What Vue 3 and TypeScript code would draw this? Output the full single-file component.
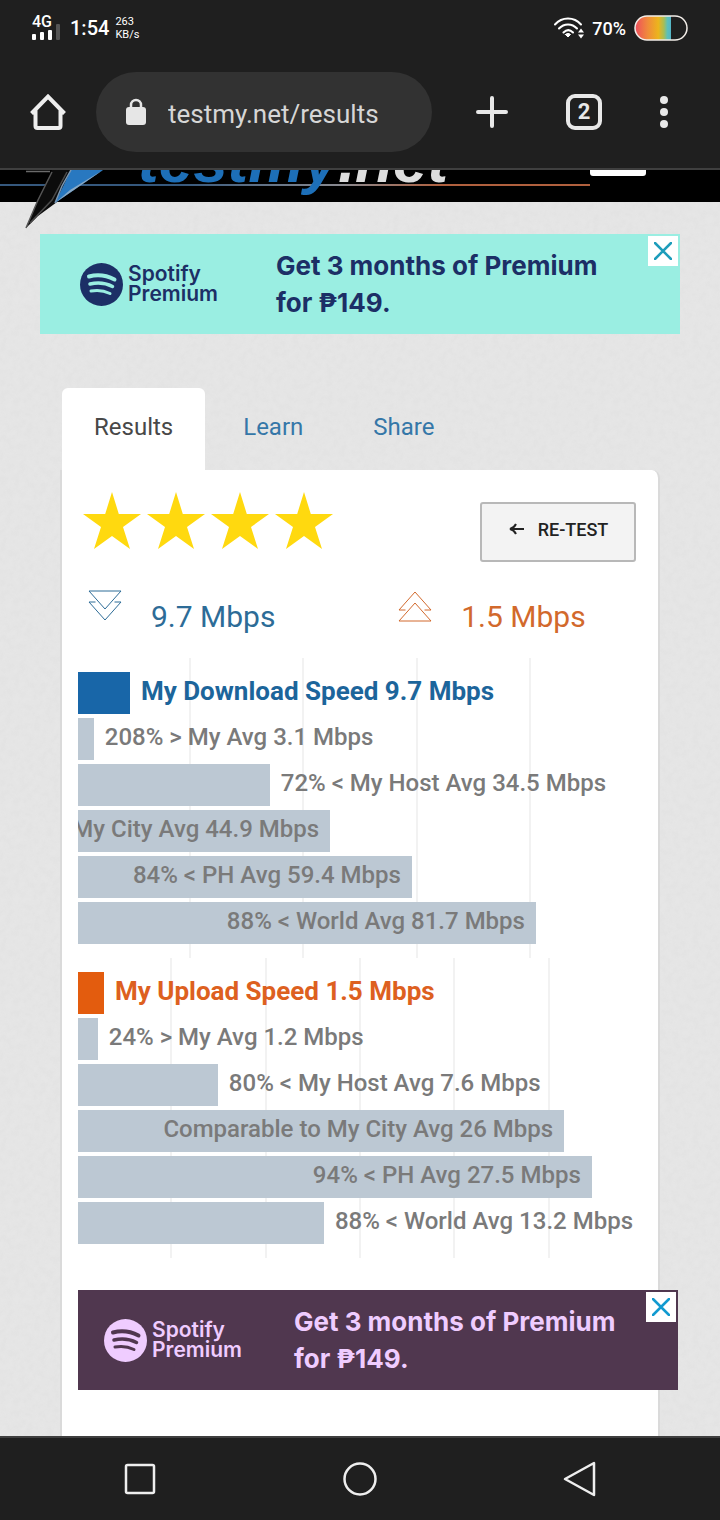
<script setup lang="ts">
interface Bar {
  label: string
  width: number
  inside?: boolean
  lead?: boolean
}

interface Chart {
  id: string
  columns: number
  bars: Bar[]
}

const charts: Chart[] = [
  {
    id: 'download',
    columns: 5,
    bars: [
      { label: 'My Download Speed 9.7 Mbps', width: 9.2, lead: true },
      { label: '208% > My Avg 3.1 Mbps', width: 2.8 },
      { label: '72% < My Host Avg 34.5 Mbps', width: 34 },
      { label: 'My City Avg 44.9 Mbps', width: 44.7, inside: true },
      { label: '84% < PH Avg 59.4 Mbps', width: 59.2, inside: true },
      { label: '88% < World Avg 81.7 Mbps', width: 81.2, inside: true },
    ],
  },
  {
    id: 'upload',
    columns: 6,
    bars: [
      { label: 'My Upload Speed 1.5 Mbps', width: 4.6, lead: true },
      { label: '24% > My Avg 1.2 Mbps', width: 3.5 },
      { label: '80% < My Host Avg 7.6 Mbps', width: 24.8 },
      { label: 'Comparable to My City Avg 26 Mbps', width: 86.2, inside: true },
      { label: '94% < PH Avg 27.5 Mbps', width: 91.1, inside: true },
      { label: '88% < World Avg 13.2 Mbps', width: 43.6 },
    ],
  },
]
</script>

<template>
  <div class="screen">
    <header class="chrome">
      <div class="status">
        <div class="network">
          <span class="gen">4G</span>
          <svg class="signal" width="30" height="18" viewBox="0 0 30 18" aria-hidden="true">
            <g fill="#fff">
              <rect x="0" y="12" width="4" height="6" rx="1" />
              <rect x="8" y="10" width="4" height="8" rx="1" />
              <rect x="16" y="8" width="4" height="10" rx="1" />
            </g>
            <rect x="24" y="2" width="4" height="16" rx="1" fill="#555" />
          </svg>
        </div>
        <span class="clock">1:54</span>
        <span class="rate">263<br />KB/s</span>
        <div class="status-right">
          <svg width="30" height="22" viewBox="0 0 30 22" fill="none" stroke="#fff" stroke-width="2" stroke-linecap="round" aria-hidden="true">
            <path d="M1 7.500C8-.5 20-.5 27 7.500M5 11.500C10 6 18 6 23 11.500M9.500 15.500C12.500 12.500 16 12.500 19 15.500" />
            <path d="M11.500 17.500 14 20l2.500-2.500C15 16 13 16 11.500 17.500z" fill="#fff" stroke-width="1" />
            <path d="m27 11.500 3 4h-6zM27 21.500l3-4h-6z" fill="#fff" stroke="none" />
          </svg>
          <span class="percent">70%</span>
          <svg width="54" height="26" viewBox="0 0 54 26" aria-hidden="true">
            <defs>
              <linearGradient id="charge" x1="0" x2="1" y1="0" y2="0">
                <stop offset="0" stop-color="#ee4d5e" />
                <stop offset=".35" stop-color="#f08a3c" />
                <stop offset=".65" stop-color="#ecb51c" />
                <stop offset=".8" stop-color="#a8bd55" />
                <stop offset=".9" stop-color="#5cc0b8" />
                <stop offset="1" stop-color="#55b5c8" />
              </linearGradient>
            </defs>
            <path d="M13 1h24v24H13a12 12 0 0 1 0-24z" fill="url(#charge)" />
            <rect x="1" y="1" width="52" height="24" rx="12" fill="none" stroke="#f2ede8" stroke-width="1.500" />
          </svg>
        </div>
      </div>

      <div class="toolbar">
        <button class="tool" type="button" aria-label="Home">
          <svg width="38" height="38" viewBox="0 0 38 38" fill="none" stroke="#eee" stroke-width="4" aria-hidden="true">
            <path d="M2.500 20.500 19 3.500l16.500 17M6.500 17v16q0 2 2 2h21q2 0 2-2V17" />
          </svg>
        </button>
        <label class="address">
          <svg width="20" height="28" viewBox="0 0 20 28" aria-hidden="true">
            <path d="M5 10V7a5 5 0 0 1 10 0v3" fill="none" stroke="#e6e6e6" stroke-width="2.500" />
            <rect y="9" width="20" height="18" rx="3" fill="#e6e6e6" />
          </svg>
          <input type="text" value="testmy.net/results" aria-label="Address" />
        </label>
        <button class="tool plus" type="button" aria-label="New tab">
          <svg width="32" height="32" viewBox="0 0 32 32" stroke="#e8e8e8" stroke-width="4" stroke-linecap="round" aria-hidden="true">
            <path d="M2 16h28M16 2v28" />
          </svg>
        </button>
        <button class="tool switcher" type="button" aria-label="Open tabs"><span>2</span></button>
        <button class="tool more" type="button" aria-label="Menu">
          <svg width="8" height="32" viewBox="0 0 8 32" fill="#e8e8e8" aria-hidden="true">
            <circle cx="4" cy="4" r="4" /><circle cx="4" cy="16" r="4" /><circle cx="4" cy="28" r="4" />
          </svg>
        </button>
      </div>
    </header>

    <main class="page">
      <div class="site-bar">
        <div class="rule"></div>
        <a class="brand" href="#"><span>testmy</span>.net</a>
        <button class="site-menu" type="button" aria-label="Site menu"></button>
        <svg class="bolt" width="84" height="60" viewBox="0 0 84 60" aria-hidden="true">
          <path d="M2 1.500H26" stroke="#6a6a6a" stroke-width="1.500" />
          <path d="M28 0H50L33 32 14 46 2 58 14 30z" fill="#0c0c0c" />
          <path d="M28 2 14 30 2 58" fill="none" stroke="#555" stroke-width="1.500" />
          <path d="M43 2 28 30 6 53" fill="none" stroke="#4a4a4a" stroke-width="1.500" />
          <path d="M47 0H79L31 33z" fill="#2878c0" />
          <path d="M47 0 38 16 31 33" fill="none" stroke="#7a98b4" stroke-width="1.500" />
          <path d="M79 0 31 33 46 20z" fill="#8aa9c4" />
        </svg>
      </div>

      <section class="ad ad-mint">
        <div class="ad-logo">
          <svg width="43" height="43" viewBox="0 0 43 43" aria-hidden="true">
            <circle cx="21.500" cy="21.500" r="21.500" fill="currentColor" />
            <g class="waves" fill="none" stroke-linecap="round">
              <path d="M9 13.500q13-3.500 25.500 3" stroke-width="4" />
              <path d="M10 21q12-3 22.500 2.500" stroke-width="3.500" />
              <path d="M11 28q10-2 19 2.500" stroke-width="3" />
            </g>
          </svg>
          <span>Spotify<br />Premium</span>
        </div>
        <p>Get 3 months of Premium<br />for ₱149.</p>
        <button class="close" type="button" aria-label="Close ad">
          <svg width="18" height="18" viewBox="0 0 18 18" fill="none" stroke="#1d9dbb" stroke-width="2.500" stroke-linecap="round" aria-hidden="true"><path d="m1 1 16 16M17 1 1 17" /></svg>
        </button>
      </section>

      <div class="results">
        <nav class="tabs">
          <a class="current" href="#results">Results</a>
          <a href="#learn">Learn</a>
          <a href="#share">Share</a>
        </nav>

        <div class="card">
          <div class="rating">
            <div class="stars" role="img" aria-label="4 stars">
              <svg v-for="n in 4" :key="n" width="60" height="58" viewBox="0 0 60 58" aria-hidden="true">
                <path d="M30 0 36.800 22H59L41 35 48 57 30 44 12 57 19 35 1 22H23.200z" fill="#ffd90f" />
              </svg>
            </div>
            <button class="retest" type="button">
              <svg width="16" height="14" viewBox="0 0 16 14" fill="none" stroke="#222" stroke-width="2" aria-hidden="true"><path d="M16 7H2M8 2Q6 6 2 7q4 1 6 5" /></svg>
              RE-TEST
            </button>
          </div>

          <div class="totals">
            <div class="total down">
              <svg width="34" height="32" viewBox="0 0 34 32" fill="none" stroke="currentColor" aria-hidden="true">
                <path d="M1 1h32L17 19zM7.500 12H1l16 18 16-18h-6.500" />
              </svg>
              <span>9.7 Mbps</span>
            </div>
            <div class="total up">
              <svg width="34" height="32" viewBox="0 0 34 32" fill="none" stroke="currentColor" aria-hidden="true">
                <path d="M1 31h32L17 13zM7.500 20H1L17 2l16 18h-6.500" />
              </svg>
              <span>1.5 Mbps</span>
            </div>
          </div>

          <section v-for="chart in charts" :key="chart.id" class="chart" :class="chart.id">
            <div class="grid" aria-hidden="true"><i v-for="n in chart.columns" :key="n"></i></div>
            <div v-for="bar in chart.bars" :key="bar.label" class="row" :class="{ lead: bar.lead }">
              <div class="bar" :style="{ width: bar.width + '%' }">
                <span v-if="bar.inside">{{ bar.label }}</span>
              </div>
              <span v-if="!bar.inside" class="beside">{{ bar.label }}</span>
            </div>
          </section>

          <section class="ad ad-plum">
            <div class="ad-logo">
              <svg width="43" height="43" viewBox="0 0 43 43" aria-hidden="true">
                <circle cx="21.500" cy="21.500" r="21.500" fill="currentColor" />
                <g class="waves" fill="none" stroke-linecap="round">
                  <path d="M9 13.500q13-3.500 25.500 3" stroke-width="4" />
                  <path d="M10 21q12-3 22.500 2.500" stroke-width="3.500" />
                  <path d="M11 28q10-2 19 2.500" stroke-width="3" />
                </g>
              </svg>
              <span>Spotify<br />Premium</span>
            </div>
            <p>Get 3 months of Premium<br />for ₱149.</p>
            <button class="close" type="button" aria-label="Close ad">
              <svg width="18" height="18" viewBox="0 0 18 18" fill="none" stroke="#129ad0" stroke-width="2.500" stroke-linecap="round" aria-hidden="true"><path d="m1 1 16 16M17 1 1 17" /></svg>
            </button>
          </section>
        </div>
      </div>
    </main>

    <nav class="system">
      <button class="tool" type="button" aria-label="Recent apps">
        <svg width="36" height="36" viewBox="0 0 36 36" fill="none" stroke="#eee" stroke-width="2.500" aria-hidden="true"><rect x="4" y="4" width="28" height="28" rx="1.500" /></svg>
      </button>
      <button class="tool" type="button" aria-label="Home screen">
        <svg width="36" height="36" viewBox="0 0 36 36" fill="none" stroke="#eee" stroke-width="2.500" aria-hidden="true"><circle cx="18" cy="18" r="15.500" /></svg>
      </button>
      <button class="tool" type="button" aria-label="Back">
        <svg width="36" height="36" viewBox="0 0 36 36" fill="none" stroke="#eee" stroke-width="2.500" stroke-linejoin="round" aria-hidden="true"><path d="M3 18 32 2v32z" /></svg>
      </button>
    </nav>
  </div>
</template>

<style>
body {
  margin: 0;
}
</style>

<style scoped>
.screen {
  display: flex;
  flex-direction: column;
  min-height: 100vh;
  font-family: Roboto, "Liberation Sans", sans-serif;
  background: #e5e5e5;
}

button {
  padding: 0;
  border: 0;
  background: none;
  font: inherit;
  cursor: pointer;
}

svg {
  display: block;
  flex: none;
}

.chrome {
  background: #1f1f1f;
  border-bottom: 2px solid #3f3f3f;
  color: #fff;
}

.status {
  display: flex;
  align-items: center;
  height: 56px;
  padding: 0 32px;
  font-weight: 500;
}

.network {
  display: flex;
  align-items: flex-end;
  position: relative;
  height: 24px;
}

.gen {
  position: absolute;
  left: 0;
  top: -2px;
  font-size: 16px;
  line-height: 16px;
}

.clock {
  margin-left: 8px;
  font-size: 20px;
  line-height: 24px;
}

.rate {
  margin-left: 6px;
  font-size: 11px;
  font-weight: 400;
  line-height: 13px;
}

.status-right {
  display: flex;
  align-items: center;
  gap: 8px;
  margin-left: auto;
}

.percent {
  font-size: 18px;
}

.toolbar {
  display: flex;
  align-items: center;
  padding: 16px 32px 16px 24px;
}

.tool {
  display: flex;
  flex: none;
  align-items: center;
  justify-content: center;
  width: 48px;
  height: 48px;
}

.address {
  display: flex;
  flex: 1;
  align-items: center;
  gap: 22px;
  min-width: 0;
  height: 80px;
  margin-left: 24px;
  padding: 0 30px;
  box-sizing: border-box;
  border-radius: 40px;
  background: #323232;
}

.address input {
  flex: 1;
  min-width: 0;
  padding: 4px 0 0;
  border: 0;
  outline: 0;
  background: none;
  color: #d6d6d6;
  font: 400 26px/32px Roboto, sans-serif;
}

.plus {
  margin-left: 36px;
}

.switcher {
  margin-left: 44px;
}

.switcher span {
  box-sizing: border-box;
  width: 36px;
  height: 36px;
  border: 4px solid #e8e8e8;
  border-radius: 9px;
  color: #e8e8e8;
  font-size: 22px;
  font-weight: 700;
  line-height: 28px;
}

.more {
  margin-left: 32px;
}

.page {
  display: flex;
  flex: 1;
  flex-direction: column;
  background: #e6e6e6 url("data:image/svg+xml,%3Csvg xmlns='http://www.w3.org/2000/svg' width='200' height='200'%3E%3Cfilter id='g' x='0' y='0' width='100%25' height='100%25'%3E%3CfeTurbulence type='fractalNoise' baseFrequency='.15' numOctaves='3' stitchTiles='stitch'/%3E%3CfeColorMatrix values='0 0 0 0 .5 0 0 0 0 .5 0 0 0 0 .5 .14 0 0 0 -.04'/%3E%3C/filter%3E%3Crect width='200' height='200' filter='url(%23g)'/%3E%3C/svg%3E");
}

.site-bar {
  position: relative;
  height: 32px;
  background: #000;
}

.brand {
  display: flex;
  position: relative;
  align-items: flex-end;
  box-sizing: border-box;
  height: 32px;
  padding: 0 0 8px 138px;
  overflow: hidden;
  color: #ddd;
  font: italic 700 62px/66px "Liberation Sans", sans-serif;
  text-decoration: none;
}

.brand span {
  color: #1d6fb8;
}

.rule {
  position: absolute;
  left: 0;
  top: 14px;
  width: 82%;
  height: 2px;
  background: linear-gradient(90deg, #35587d 0 30%, #8a8a90 58%, #b0603e 75%);
}

.site-menu {
  position: absolute;
  right: 74px;
  top: 0;
  width: 56px;
  height: 6px;
  border-radius: 0 0 3px 3px;
  background: #fff;
}

.bolt {
  position: absolute;
  left: 24px;
  top: 0;
}

.ad {
  display: flex;
  position: relative;
  align-items: center;
  box-sizing: border-box;
  height: 100px;
}

.ad-mint {
  margin: 32px 40px 0;
  padding-left: 40px;
  background: #9aeee2;
  color: #1c2f66;
}

.ad-mint .waves {
  stroke: #9aeee2;
}

.ad-plum {
  margin: 32px -36px 0 0;
  padding-left: 26px;
  background: #50374f;
  color: #efccff;
}

.ad-plum .waves {
  stroke: #50374f;
}

.ad-logo {
  display: flex;
  align-items: center;
  gap: 5px;
  width: 196px;
  font: 600 21px/20px Inter, sans-serif;
}

.ad-plum .ad-logo {
  width: 190px;
}

.ad p {
  margin: 0;
  font: 700 26px/37px Inter, sans-serif;
  white-space: nowrap;
}

.close {
  display: flex;
  position: absolute;
  top: 2px;
  right: 2px;
  align-items: center;
  justify-content: center;
  width: 30px;
  height: 30px;
  background: #fff;
}

.results {
  display: flex;
  flex: 1;
  flex-direction: column;
  margin: 54px 60px 0;
}

.tabs {
  display: flex;
  gap: 6px;
  padding-left: 2px;
}

.tabs a {
  padding: 0 32px 4px;
  color: #3577a8;
  font-size: 24px;
  line-height: 78px;
  text-decoration: none;
}

.tabs .current {
  border-radius: 6px 6px 0 0;
  background: #fff;
  color: #484848;
}

.card {
  flex: 1;
  padding: 22px 16px 46px;
  border: solid #dadada;
  border-width: 0 2px;
  border-radius: 0 8px 0 0;
  background: #fff;
  background-clip: padding-box;
}

.rating {
  display: flex;
  align-items: flex-start;
  justify-content: space-between;
  padding: 0 6px 0 4px;
}

.stars {
  display: flex;
  gap: 4px;
}

.retest {
  display: flex;
  align-items: center;
  justify-content: center;
  gap: 14px;
  box-sizing: border-box;
  width: 156px;
  height: 60px;
  margin-top: 10px;
  padding-bottom: 6px;
  border: 2px solid #b8b8b8;
  border-radius: 3px;
  background: #f3f3f3;
  color: #222;
  font-size: 18px;
  font-weight: 500;
}

.totals {
  display: grid;
  grid-template-columns: 55% 45%;
  height: 96px;
}

.total {
  display: flex;
  align-items: flex-start;
  gap: 29px;
  padding: 28px 0 0 10px;
  font-size: 30px;
  line-height: 54px;
}

.total span {
  white-space: nowrap;
}

.down {
  color: #2d6c97;
}

.up {
  color: #d2692c;
}

.chart {
  display: flex;
  position: relative;
  flex-direction: column;
  gap: 4px;
  padding: 14px 0;
}

.grid {
  display: flex;
  position: absolute;
  inset: 0;
}

.grid i {
  flex: 1;
  box-sizing: border-box;
  border-right: 2px solid #f2f2f2;
}

.grid i:last-child {
  border: 0;
}

.row {
  display: flex;
  position: relative;
  height: 42px;
  color: #7a7a7a;
  font-size: 24px;
  font-weight: 500;
  line-height: 38px;
  white-space: nowrap;
}

.bar {
  display: flex;
  flex: none;
  justify-content: flex-end;
  box-sizing: border-box;
  padding-right: 11px;
  overflow: hidden;
  background: #bcc8d3;
}

.beside {
  padding-left: 11px;
}

.lead {
  font-size: 26px;
  font-weight: 700;
}

.download .lead {
  color: #1c659b;
}

.download .lead .bar {
  background: #1866a8;
}

.upload .lead {
  color: #dd6020;
}

.upload .lead .bar {
  background: #e35c0e;
}

.system {
  display: flex;
  justify-content: space-between;
  align-items: center;
  height: 82px;
  padding: 0 116px;
  border-top: 2px solid #3f3f3f;
  background: #1f1f1f;
}
</style>
